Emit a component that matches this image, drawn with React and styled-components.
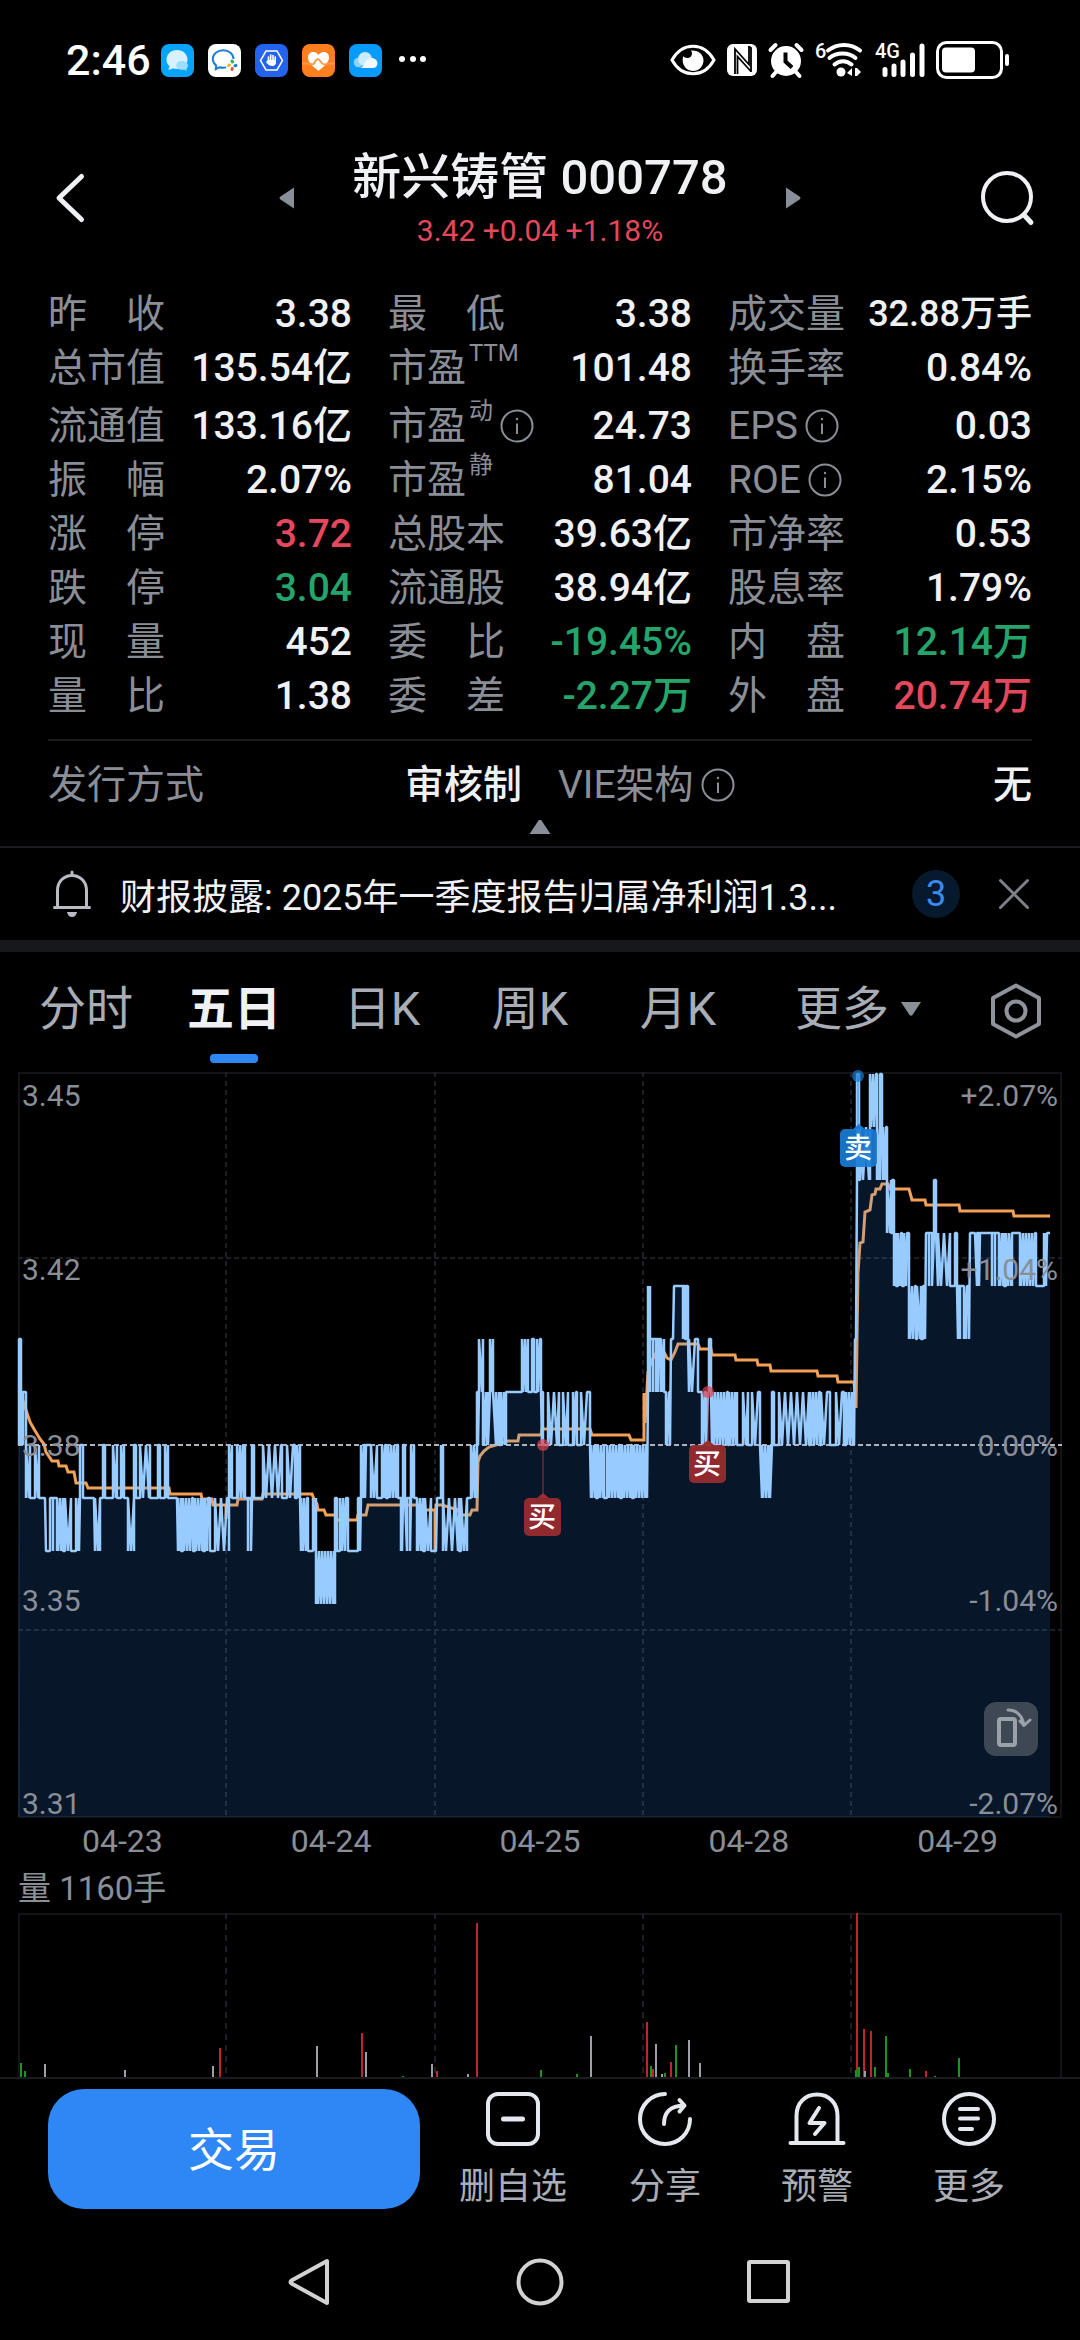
import React, { useState } from 'react'
import styled, { createGlobalStyle } from 'styled-components'

const RED = '#e5485d'
const GREEN = '#24a56c'
const WHITE = '#f0f1f5'
const GREY = '#8a8e96'
const LINE = '#1a1c20'
const BLUE = '#2f87f6'
const FONT = "Roboto, 'Noto Sans CJK SC', sans-serif"

const GlobalStyle = createGlobalStyle`
  body {
    margin: 0;
    background: #000000;
    color: ${WHITE};
    font-family: ${FONT};
  }
  button {
    margin: 0;
    padding: 0;
    border: 0;
    background: none;
    color: inherit;
    font-family: inherit;
    cursor: pointer;
  }
  svg {
    display: block;
    flex: none;
    overflow: visible;
  }
`
const Page = styled.div`
  display: flex;
  flex-direction: column;
  min-height: 100vh;
`

/* status bar */
const StatusBar = styled.div`
  display: flex;
  align-items: center;
  justify-content: space-between;
  height: 120px;
  padding: 0 70px 0 66px;
`
const StatusGroup = styled.div`
  display: flex;
  align-items: center;
  gap: ${(props) => props.gap}px;
`
const Clock = styled.span`
  font-size: 43px;
  line-height: 48px;
  font-weight: 500;
  color: #ffffff;
  margin-right: -4px;
`

/* header */
const Header = styled.header`
  display: flex;
  align-items: center;
  justify-content: space-between;
  padding: 22px 48px 33px;
`
const StockSwitch = styled.div`
  display: flex;
  align-items: center;
  justify-content: space-between;
  width: 54%;
`
const StockName = styled.div`
  padding-top: 6px;
  text-align: center;
`
const Title = styled.h1`
  margin: 0;
  font-size: 49px;
  line-height: 60px;
  font-weight: 500;
`
const Quote = styled.div`
  font-size: 30px;
  line-height: 46px;
  color: ${RED};
`

/* key figures */
const Stats = styled.dl`
  display: grid;
  grid-template-columns: repeat(3, 1fr);
  grid-template-rows: 54px 54px 58px repeat(5, 54px);
  align-items: end;
  column-gap: 36px;
  margin: 0 48px;
  padding-bottom: 16px;
  border-bottom: 2px solid ${LINE};
`
const IssueStats = styled.dl`
  display: grid;
  grid-template-columns: repeat(2, 1fr);
  column-gap: 36px;
  margin: 0 48px;
  padding-top: 17px;
`
const Stat = styled.div`
  display: flex;
  align-items: center;
  justify-content: space-between;
  height: 54px;
  font-size: 39px;
  line-height: 54px;
  white-space: nowrap;
`
const StatLabel = styled.dt`
  display: flex;
  align-items: center;
  color: ${GREY};
`
const StatSup = styled.sup`
  align-self: flex-start;
  margin-left: 3px;
  font-size: 24px;
  line-height: 24px;
`
const StatValue = styled.dd`
  margin: 0;
  font-size: ${(props) => (props.$long ? 36 : 39)}px;
  font-weight: 500;
  color: ${(props) => props.color || WHITE};
`
const InfoButton = styled.button`
  margin-left: 7px;
`
const Collapse = styled.button`
  display: flex;
  justify-content: center;
  width: 100%;
  height: 34px;
  padding-top: 7px;
`

/* notice */
const Notice = styled.section`
  display: flex;
  align-items: center;
  height: 92px;
  padding: 0 48px;
  border-top: 2px solid ${LINE};
  border-bottom: 12px solid #17181c;
`
const NoticeText = styled.a`
  flex: 1;
  margin-left: 24px;
  font-size: 36px;
  color: ${WHITE};
  text-decoration: none;
  white-space: nowrap;
`
const NoticeCount = styled.span`
  width: 48px;
  border-radius: 24px;
  background: #07192d;
  color: #3a8af2;
  font-size: 36px;
  line-height: 48px;
  text-align: center;
`
const CloseButton = styled.button`
  margin-left: 36px;
`

/* period tabs */
const Tabs = styled.nav`
  display: grid;
  grid-template-columns: repeat(5, 148fr) 212fr 104fr;
  height: 120px;
  padding: 0 12px;
`
const Tab = styled.button`
  display: flex;
  flex-direction: column;
  align-items: center;
  gap: 21px;
  padding-top: 33px;
  font-size: 47px;
  line-height: 48px;
  font-weight: ${(props) => (props.$active ? 700 : 400)};
  color: ${(props) => (props.$active ? WHITE : '#a9adb5')};
  &::after {
    content: '';
    width: 48px;
    height: 9px;
    border-radius: 4px;
    background: ${(props) => (props.$active ? BLUE : 'transparent')};
  }
`
const TabText = styled.span`
  display: flex;
  align-items: center;
  gap: 12px;
`
const SettingsButton = styled.button`
  display: flex;
  justify-content: center;
  padding-top: 31px;
`

/* charts */
const ChartBox = styled.section`
  position: relative;
  margin: 0 18px;
  svg {
    width: 100%;
    height: auto;
  }
`
const RotateButton = styled.button`
  position: absolute;
  right: 24px;
  bottom: 61px;
  width: 54px;
  height: 54px;
  border-radius: 12px;
  background: #3e4855;
`
const Dates = styled.div`
  display: grid;
  grid-template-columns: repeat(5, 1fr);
  margin: 0 18px;
  font-size: 32px;
  line-height: 48px;
  color: ${GREY};
  text-align: center;
`
const VolumeTitle = styled.div`
  margin: 0 18px;
  font-size: 33px;
  line-height: 48px;
  color: ${GREY};
`

/* bottom */
const ActionBar = styled.footer`
  display: grid;
  grid-template-columns: 389fr repeat(4, 152fr);
  padding: 10px 35px 0 48px;
  border-top: 2px solid ${LINE};
`
const TradeButton = styled.button`
  height: 120px;
  margin-right: 17px;
  padding-bottom: 6px;
  border-radius: 36px;
  background: ${BLUE};
  color: #ffffff;
  font-size: 46px;
`
const Action = styled.button`
  display: flex;
  flex-direction: column;
  align-items: center;
  gap: 16px;
  padding-top: 2px;
  font-size: 36px;
  line-height: 48px;
  color: #a9adb5;
  white-space: nowrap;
`
const SystemNav = styled.nav`
  display: flex;
  justify-content: center;
  gap: 177px;
  padding: 45px 0 32px;
`

const stats = [
  ['昨　收', '3.38'],
  ['最　低', '3.38'],
  ['成交量', '32.88万手', { long: true }],
  ['总市值', '135.54亿'],
  ['市盈', '101.48', { sup: 'TTM' }],
  ['换手率', '0.84%'],
  ['流通值', '133.16亿'],
  ['市盈', '24.73', { sup: '动', info: true }],
  ['EPS', '0.03', { info: true }],
  ['振　幅', '2.07%'],
  ['市盈', '81.04', { sup: '静' }],
  ['ROE', '2.15%', { info: true }],
  ['涨　停', '3.72', { color: RED }],
  ['总股本', '39.63亿'],
  ['市净率', '0.53'],
  ['跌　停', '3.04', { color: GREEN }],
  ['流通股', '38.94亿'],
  ['股息率', '1.79%'],
  ['现　量', '452'],
  ['委　比', '-19.45%', { color: GREEN }],
  ['内　盘', '12.14万', { color: GREEN }],
  ['量　比', '1.38'],
  ['委　差', '-2.27万', { color: GREEN }],
  ['外　盘', '20.74万', { color: RED }],
]

// [from x, to x, high, low], levels are cents away from 3.38
const priceRuns = [
  [1, 3, 2, 0], [3, 5, 1, 1], [5, 8, 1, 0], [8, 12, 0, -1], [12, 16, -1, -1],
  [17, 21, 0, -1], [22, 27, -1, -1], [28, 32, -2, -2], [32, 35, -1, -2], [35, 39, -1, -1],
  [39, 45, -1, -2], [47, 53, -1, -2], [53, 57, -2, -2], [58, 61, -1, -2], [62, 65, 0, -1],
  [65, 76, -1, -1], [77, 82, -1, -2], [82, 85, -1, -1], [85, 87, 0, -1], [87, 95, -1, -1],
  [95, 99, 0, -1], [99, 102, -1, -1], [103, 106, 0, -1], [106, 110, -1, -1], [110, 116, -1, -2],
  [116, 118, 0, -1], [119, 121, -1, -1], [122, 132, 0, -1], [132, 139, -1, -1], [140, 142, 0, -1],
  [143, 146, -1, -1], [147, 150, 0, -1], [150, 159, -1, -1], [160, 163, -1, -2], [165, 175, -1, -2],
  [177, 185, -1, -2], [187, 192, -1, -2], [195, 197, -2, -2], [197, 211, -1, -2],
  [211, 214, 0, -1], [214, 218, -1, -1], [219, 227, 0, -1], [227, 230, -1, -1], [230, 233, -1, -2],
  [234, 236, 0, -1], [237, 244, -1, -1], [245, 264, 0, -1], [264, 268, -1, -1], [269, 277, 0, -1],
  [279, 282, 0, -1], [283, 290, -1, -2], [290, 294, -2, -2], [295, 298, -1, -2], [298, 317, -2, -3],
  [317, 319, -1, -2], [320, 322, -2, -2], [322, 330, -1, -2], [330, 339, -2, -2], [340, 342, -1, -2],
  [343, 347, 0, -1], [348, 353, 0, 0], [353, 359, 0, -1], [359, 363, -1, -1], [364, 368, 0, -1],
  [370, 380, 0, -1], [380, 383, -1, -1], [383, 384, -1, -2], [385, 387, 0, -1], [389, 392, -1, -2],
  [393, 396, 0, -1], [396, 399, -1, -1], [399, 405, -1, -2], [407, 413, -1, -2], [413, 418, -2, -2],
  [419, 422, -1, -1], [423, 425, 0, -1], [425, 441, -1, -2], [443, 449, -1, -2], [449, 452, -1, -1],
  [453, 459, 0, -1], [459, 460, 1, 0], [461, 465, 2, 1], [465, 470, 1, 0], [472, 475, 2, 1],
  [478, 481, 1, 0], [483, 488, 1, 0], [488, 504, 1, 1], [504, 510, 2, 1], [511, 513, 1, 1],
  [514, 516, 2, 1], [519, 523, 2, 1], [524, 525, 1, 0], [525, 529, 0, 0], [530, 541, 1, 0],
  [541, 544, 0, 0], [545, 550, 1, 0], [550, 555, 0, 0], [555, 559, 1, 0], [560, 563, 0, 0],
  [563, 572, 1, 0], [573, 578, 0, -1], [580, 586, 0, -1], [586, 589, -1, -1], [589, 602, 0, -1],
  [604, 614, 0, -1], [616, 629, 0, -1], [630, 632, 3, 1], [632, 635, 2, 1], [635, 638, 2, 2],
  [638, 640, 2, 1], [641, 643, 2, 2], [643, 646, 2, 1], [646, 648, 1, 1], [648, 652, 1, 0],
  [653, 655, 2, 2], [656, 665, 3, 3], [665, 667, 3, 2], [668, 670, 3, 2], [671, 680, 2, 1],
  [680, 684, 1, 1], [684, 688, 1, 0], [690, 691, 1, 1], [691, 693, 2, 1], [694, 710, 1, 0],
  [711, 719, 1, 0], [720, 724, 0, 0], [725, 730, 1, 0], [731, 733, 0, 0], [734, 742, 1, 0],
  [744, 752, 0, -1], [754, 756, 1, 0], [757, 761, 0, 0], [761, 791, 1, 0], [792, 802, 1, 0],
  [803, 812, 1, 0], [812, 818, 0, 0], [818, 826, 1, 0], [828, 836, 1, 0], [837, 838, 2, 2],
  [839, 841, 7, 5], [842, 852, 6, 5], [852, 859, 7, 6], [859, 862, 6, 5], [862, 864, 7, 6],
  [865, 869, 6, 5], [869, 873, 5, 4], [874, 876, 5, 4], [876, 878, 4, 3], [880, 884, 4, 3],
  [886, 891, 4, 3], [891, 898, 3, 2], [899, 903, 3, 2], [905, 907, 3, 2], [908, 911, 4, 4],
  [911, 914, 4, 3], [916, 918, 5, 4], [920, 932, 4, 3], [934, 936, 3, 3], [937, 939, 4, 3],
  [940, 942, 3, 2], [942, 946, 3, 3], [946, 951, 3, 2], [952, 957, 4, 4], [959, 961, 4, 3],
  [962, 974, 4, 4], [974, 977, 4, 3], [977, 981, 4, 4], [981, 986, 4, 3], [988, 994, 4, 3],
  [994, 1002, 4, 4], [1002, 1018, 4, 3], [1018, 1025, 3, 3], [1026, 1028, 4, 3], [1029, 1032, 4, 4],
]

const averagePoints =
  '3,323 9,341 12,350 16,357 22,367 26,372 28,380 34,389 40,389 41,394 48,394 50,400 56,400 58,411 68,411 70,416 151,416 152,422 183,422 184,427 194,427 195,433 208,433 208,447 209,433 219,433 220,427 244,427 245,422 294,422 296,427 299,432 300,438 306,438 308,443 318,443 319,448 339,448 340,443 348,443 350,433 404,433 405,438 417,438 417,480 418,433 424,433 440,438 442,443 452,443 454,438 459,438 460,390 462,384 466,379 471,375 478,373 489,369 500,369 501,363 523,363 524,357 572,357 574,363 611,363 613,368 626,368 626,321 627,351 630,300 634,288 640,278 645,278 649,286 653,288 657,280 660,272 680,272 682,277 693,277 694,283 717,283 718,288 739,288 740,293 752,293 753,299 799,299 800,304 819,304 820,310 836,310 838,336 840,201 842,171 845,170 847,140 852,138 854,123 857,122 858,117 862,117 864,112 870,112 872,117 891,117 894,128 907,128 908,133 941,133 942,139 995,139 996,144 1032,144'

const volumes = [
  [3, 14, 'g'], [7, 6, 'g'], [27, 13, 'w'], [107, 7, 'w'], [195, 11, 'w'], [202, 29, 'r'],
  [299, 31, 'w'], [344, 44, 'r'], [348, 25, 'w'], [385, 1, 'g'], [414, 13, 'w'], [419, 6, 'r'],
  [450, 3, 'w'], [459, 154, 'r'], [523, 7, 'g'], [559, 3, 'g'], [573, 41, 'w'], [629, 55, 'r'],
  [633, 11, 'g'], [635, 8, 'r'], [638, 33, 'w'], [644, 3, 'w'], [647, 4, 'g'], [653, 15, 'r'],
  [658, 32, 'g'], [671, 37, 'w'], [682, 14, 'w'], [839, 164, 'r'], [846, 48, 'r'], [853, 46, 'r'],
  [838, 7, 'g'], [841, 10, 'g'], [847, 6, 'w'], [857, 10, 'g'], [868, 41, 'g'], [870, 4, 'g'],
  [892, 8, 'g'], [908, 6, 'r'], [917, 1, 'g'], [941, 19, 'g'],
]
const volumeColors = { r: '#c2242b', g: '#1f9320', w: '#9c9fa8' }

const levelY = (level) => Math.round(373 - level * 53) 

const buildPriceLine = () => {
  const points = []
  priceRuns.forEach(([from, to, high, low]) => {
    if (high === low) {
      points.push([from, high], [to, high])
      return
    }
    let up = false
    points.push([from, low])
    for (let x = from; x < to; x += (x % 3) + 1) {
      up = !up
      points.push([x, up ? high : low])
    }
    points.push([to, high], [to, low])
  })
  return points.map(([x, level]) => `${x},${levelY(level)}`).join(' ')
}
const priceLine = buildPriceLine()

const gridX = [208, 417, 625, 833]

function InfoIcon() {
  return (
    <svg width="34" height="34" viewBox="0 0 34 34" fill="none" stroke={GREY} strokeWidth="2">
      <circle cx="17" cy="17" r="15.5" />
      <path d="M17 14.5v10.5" />
      <circle cx="17" cy="10" r="1.2" fill={GREY} stroke="none" />
    </svg>
  )
}

function StatItem({ label, value, sup, info, color, long }) {
  return (
    <Stat>
      <StatLabel>
        {label}
        {sup && <StatSup>{sup}</StatSup>}
        {info && (
          <InfoButton aria-label={label}>
            <InfoIcon />
          </InfoButton>
        )}
      </StatLabel>
      <StatValue color={color} $long={long}>
        {value}
      </StatValue>
    </Stat>
  )
}

function AppIcons() {
  return (
    <StatusGroup gap={14}>
      <svg width="33" height="33" viewBox="0 0 33 33">
        <rect width="33" height="33" rx="8" fill="#08a4fb" />
        <path d="M16 6c6 0 10.500 4.200 10.500 9.500S22 25 16 25c-1.600 0-3-.3-4.300-.8-1.200.9-3 1.500-4.700 1.300 1-1 1.500-2.100 1.500-3.200C6.600 20.500 5.500 18.200 5.500 15.500 5.500 10.200 10 6 16 6z" fill="#d8f1ff" />
        <path d="M21 17c3.300 0 6 2 6 4.600 0 1.400-.6 2.400-1.600 3.200 0 .7.300 1.300.8 1.800-1.200.1-2.200-.2-3-.8-4.200.6-8-1.200-8-4.200 0-2.600 2.500-4.600 5.800-4.600z" fill="#9bdcff" />
      </svg>
      <svg width="33" height="33" viewBox="0 0 33 33" fill="none">
        <rect width="33" height="33" rx="8" fill="#ffffff" />
        <path d="M25.500 15c0-5-4.600-8.800-10.300-8.800S4.800 10 4.800 15c0 2.800 1.300 5 3.400 6.600L7.700 25l3.700-1.700c1.200.3 2.500.5 3.800.5 1 0 2-.1 3-.4" stroke="#1c7fd6" strokeWidth="2" />
        <path d="M24 17l.5 1" stroke="#2bb24c" strokeWidth="3" strokeLinecap="round" />
        <path d="M28 21.500l-1 .2" stroke="#1c7fd6" strokeWidth="3" strokeLinecap="round" />
        <path d="M24 25.500l.2-1" stroke="#f0562a" strokeWidth="3" strokeLinecap="round" />
        <path d="M20.500 21.500l1-.5" stroke="#f6b81c" strokeWidth="3" strokeLinecap="round" />
      </svg>
      <svg width="33" height="33" viewBox="0 0 33 33" fill="none">
        <rect width="33" height="33" rx="8" fill="#2463ee" />
        <path d="M11 7h11l5.500 9.500L22 26H11L5.500 16.500z" stroke="#ffffff" strokeWidth="1.500" />
        <path d="M13.500 18v-5M15.700 17v-6M18 17v-5.500M20.200 18v-5" stroke="#ffffff" strokeWidth="1.600" strokeLinecap="round" />
        <path d="M12.800 16h8.200v2.500c0 2-1.300 3.500-3.500 3.500-2.800 0-4.700-1.500-6.500-4z" fill="#ffffff" />
      </svg>
      <svg width="33" height="33" viewBox="0 0 33 33" fill="none">
        <rect width="33" height="33" rx="8" fill="#ff7f1e" />
        <path d="M16.500 27C10 22 6 18 6 13.300 6 10 8.500 8 11.300 8c2.200 0 4 1.200 5.200 3 1.200-1.800 3-3 5.200-3C24.500 8 27 10 27 13.300 27 18 23 22 16.500 27z" fill="#ffffff" />
        <path d="M0 19.500h6c3 0 4.500 2 6 0s2-4.500 4-4.500 3 5.500 6 5.500 3-1 5-1h6" stroke="#ff9a4a" strokeWidth="2" />
      </svg>
      <svg width="33" height="33" viewBox="0 0 33 33">
        <rect width="33" height="33" rx="8" fill="#079bfb" />
        <circle cx="9.500" cy="18.500" r="4.800" fill="#8fd4ff" />
        <circle cx="16" cy="15" r="7" fill="#c9ebff" />
        <path d="M11 24c4.500-1 4-7 9-9.500 4-1.800 8.500.6 8.500 5 0 2.600-2 4.500-4.500 4.500z" fill="#f2faff" />
      </svg>
      <svg width="34" height="34" viewBox="0 0 34 34" fill="#ffffff">
        <circle cx="6" cy="16" r="3" />
        <circle cx="17" cy="16" r="3" />
        <circle cx="27" cy="16" r="3" />
      </svg>
    </StatusGroup>
  )
}

function SystemIcons() {
  return (
    <StatusGroup gap={10}>
      <svg width="46" height="32" viewBox="0 0 46 32" fill="none" stroke="#ffffff" strokeWidth="3">
        <path d="M2 16C7 7 14 2.200 23 2.200S39 7 44 16c-5 9-12 13.800-21 13.800S7 25 2 16z" />
        <path d="M21 6.500c2 3 .8 6.800-2.600 7.400-2 .4-4-.3-5.200-1.600C11 19.500 15.500 27 23 27c6 0 10.500-4.700 10.500-10.500S29 6 21 6.500z" fill="#ffffff" stroke="none" />
      </svg>
      <svg width="32" height="32" viewBox="0 0 32 32">
        <rect x="1" width="30" height="32" rx="6" fill="#ffffff" />
        <path d="M9 30V5l14 15.500V2M11.500 30V12.500L25 27.500M23 2.500L25 4v24" fill="none" stroke="#000000" strokeWidth="1.800" />
      </svg>
      <svg width="36" height="36" viewBox="0 0 36 36" fill="#ffffff">
        <circle cx="18" cy="19" r="15" />
        <path d="M2.500 8L7.500 3M33.500 8l-5-5M8 30l-3.500 4M28 30l3.500 4" stroke="#ffffff" strokeWidth="4" strokeLinecap="round" />
        <path d="M17.500 10.500v9l6.500 6" fill="none" stroke="#000000" strokeWidth="4" />
      </svg>
      <svg width="50" height="38" viewBox="0 0 50 38" fill="none" stroke="#ffffff" strokeWidth="4" strokeLinecap="round">
        <text x="1" y="17" fontSize="20" fontWeight="500" fontFamily={FONT} fill="#ffffff" stroke="none">6</text>
        <path d="M14 9.500C23 2 37 2 46 9.500M15.500 17c7-6 19-6 26 0M20.500 23.500c5-4.500 12-4.500 17 0" />
        <circle cx="27" cy="31" r="4.500" fill="#ffffff" stroke="none" />
        <path d="M38 27v8l-5-3zM41 27h2l4 4-4 4h-2z" fill="#ffffff" stroke="none" />
      </svg>
      <svg width="52" height="38" viewBox="0 0 52 38" stroke="#ffffff" strokeWidth="5" strokeLinecap="round">
        <text x="1" y="17" fontSize="20" fontWeight="500" fontFamily={FONT} fill="#ffffff" stroke="none">4G</text>
        <path d="M11 28.500v5M20 25v8.500M29 21v12.500M38.500 14v19.500M48 5v28.500" />
      </svg>
      <svg width="74" height="38" viewBox="0 0 74 38" fill="none">
        <rect x="1.500" y="1.500" width="64" height="35" rx="9" stroke="#ffffff" strokeWidth="3" />
        <rect x="6" y="6.500" width="33" height="25" rx="4" fill="#ffffff" />
        <path d="M71 15v8" stroke="#ffffff" strokeWidth="4" strokeLinecap="round" />
      </svg>
    </StatusGroup>
  )
}

function TradeMark({ x, y, dotX, dotY, text, fill, dotFill }) {
  return (
    <g>
      <path d={`M${dotX} ${dotY}V${y - 4}`} stroke={dotFill} strokeWidth="1" opacity="0.7" />
      <circle cx={dotX} cy={dotY} r="6" fill={dotFill} opacity="0.7" />
      <path d={`M${x + 13} ${y}l6 -5l6 5z`} fill={fill} />
      <rect x={x} y={y} width="37" height="38" rx="5" fill={fill} opacity="0.92" />
      <text x={x + 18} y={y + 29} fontSize="28" fontWeight="500" fill="#ffffff" textAnchor="middle">
        {text}
      </text>
    </g>
  )
}

function PriceChart() {
  return (
    <svg viewBox="0 0 1044 745" fontFamily={FONT} role="img" aria-label="五日">
      <g fill="none" stroke="#1d1f24" strokeWidth="2">
        <rect x="1" y="1" width="1042" height="744" stroke="#121418" />
        {gridX.map((x) => (
          <path key={x} d={`M${x} 0V745`} strokeDasharray="5 4" />
        ))}
        <path d="M0 186H1044M0 558H1044" strokeDasharray="5 3" />
      </g>
      <polyline points={averagePoints} fill="none" stroke="#f3a157" strokeWidth="3" />
      <polygon points={`0,745 ${priceLine} 1032,745`} fill="#2e8cff" opacity="0.16" />
      <path d="M0 373H1044" stroke="#aeb3bd" strokeWidth="2" strokeDasharray="5 3" />
      <polyline points={priceLine} fill="none" stroke="#98cbff" strokeWidth="2.500" strokeLinejoin="bevel" />
      <g fontSize="30" fill={GREY}>
        <text x="4" y="34">3.45</text>
        <text x="4" y="208">3.42</text>
        <text x="4" y="384">3.38</text>
        <text x="4" y="539">3.35</text>
        <text x="4" y="742">3.31</text>
        <g textAnchor="end">
          <text x="1040" y="34">+2.07%</text>
          <text x="1040" y="208">+1.04%</text>
          <text x="1040" y="384">0.00%</text>
          <text x="1040" y="539">-1.04%</text>
          <text x="1040" y="742">-2.07%</text>
        </g>
      </g>
      <TradeMark x={506} y={426} dotX={525} dotY={373} text="买" fill="#9d2d30" dotFill="#d8414f" />
      <TradeMark x={671} y={373} dotX={690} dotY={320} text="买" fill="#9d2d30" dotFill="#d8414f" />
      <TradeMark x={822} y={57} dotX={840} dotY={4} text="卖" fill="#1a7cd4" dotFill="#1a7cd4" />
    </svg>
  )
}

function VolumeChart() {
  return (
    <svg viewBox="0 0 1044 164" role="img" aria-label="量">
      <g fill="none" stroke="#1d1f24" strokeWidth="2">
        <path d="M1 164V1H1043V164" stroke="#121418" />
        {gridX.map((x) => (
          <path key={x} d={`M${x} 0V164`} strokeDasharray="6 5" />
        ))}
      </g>
      {volumes.map(([x, height, kind]) => (
        <rect key={x} x={x - 1} y={164 - height} width="2" height={height} fill={volumeColors[kind]} />
      ))}
    </svg>
  )
}

function App() {
  const [period, setPeriod] = useState('五日')

  return (
    <>
      <GlobalStyle />
      <Page>
        <StatusBar>
          <StatusGroup gap={14}>
            <Clock>2:46</Clock>
            <AppIcons />
          </StatusGroup>
          <SystemIcons />
        </StatusBar>

        <Header>
          <button aria-label="返回">
            <svg width="52" height="52" viewBox="0 0 52 52" fill="none" stroke={WHITE} strokeWidth="5" strokeLinecap="round" strokeLinejoin="round">
              <path d="M33.500 4.500L11 26l22.500 21.500" />
            </svg>
          </button>
          <StockSwitch>
            <button aria-label="上一只">
              <svg width="24" height="24" viewBox="0 0 24 24" fill="#8a8e98">
                <path d="M20 1.500v21L6.500 13.500q-2-1.500 0-3z" />
              </svg>
            </button>
            <StockName>
              <Title>新兴铸管 000778</Title>
              <Quote>3.42 +0.04 +1.18%</Quote>
            </StockName>
            <button aria-label="下一只">
              <svg width="24" height="24" viewBox="0 0 24 24" fill="#8a8e98">
                <path d="M4 1.500v21l13.500-9q2-1.500 0-3z" />
              </svg>
            </button>
          </StockSwitch>
          <button aria-label="搜索">
            <svg width="52" height="52" viewBox="0 0 52 52" fill="none" stroke={WHITE} strokeWidth="4" strokeLinecap="round">
              <circle cx="27" cy="25" r="24" />
              <path d="M44 43l7 7.500" strokeWidth="5" />
            </svg>
          </button>
        </Header>

        <Stats>
          {stats.map(([label, value, extra], i) => (
            <StatItem key={i} label={label} value={value} {...extra} />
          ))}
        </Stats>
        <IssueStats>
          <StatItem label="发行方式" value="审核制" />
          <StatItem label="VIE架构" value="无" info />
        </IssueStats>
        <Collapse aria-label="收起">
          <svg width="22" height="16" viewBox="0 0 22 16" fill="#8a8e98">
            <path d="M9.500 1.500q1.500-1.500 3 0L21.500 15H.5z" />
          </svg>
        </Collapse>

        <Notice>
          <svg width="48" height="48" viewBox="0 0 48 48" fill="none" stroke="#b9bcc3" strokeWidth="3" strokeLinecap="round">
            <path d="M9.500 37V20.500C9.500 12 15.500 5.500 24 5.500s14.500 6.500 14.500 15V37M6.500 37.500h35M24 2v3" />
            <path d="M19 42h10q-1 5-5 5t-5-5z" fill="#b9bcc3" stroke="none" />
          </svg>
          <NoticeText href="#">财报披露: 2025年一季度报告归属净利润1.3...</NoticeText>
          <NoticeCount>3</NoticeCount>
          <CloseButton aria-label="关闭">
            <svg width="36" height="36" viewBox="0 0 36 36" stroke="#7d8088" strokeWidth="3" strokeLinecap="round">
              <path d="M4.500 4.500l27 27M31.500 4.500l-27 27" />
            </svg>
          </CloseButton>
        </Notice>

        <Tabs>
          {['分时', '五日', '日K', '周K', '月K'].map((name) => (
            <Tab key={name} $active={name === period} onClick={() => setPeriod(name)}>
              <TabText>{name}</TabText>
            </Tab>
          ))}
          <Tab>
            <TabText>
              更多
              <svg width="20" height="16" viewBox="0 0 20 16" fill="#8a8e96">
                <path d="M0 1h20l-8.500 13q-1.500 1.500-3 0z" />
              </svg>
            </TabText>
          </Tab>
          <SettingsButton aria-label="设置">
            <svg width="54" height="56" viewBox="0 0 54 56" fill="none" stroke="#8f939b" strokeWidth="4" strokeLinejoin="round">
              <path d="M27 2.500L50 15v26L27 53.500 4 41V15z" />
              <circle cx="27" cy="28" r="9.500" />
            </svg>
          </SettingsButton>
        </Tabs>

        <ChartBox>
          <PriceChart />
          <RotateButton aria-label="横屏">
            <svg viewBox="0 0 54 54" fill="none" stroke="#9ba1a9" strokeWidth="4" strokeLinecap="round" strokeLinejoin="round">
              <rect x="15" y="17" width="16" height="26" rx="2" />
              <path d="M24 8c8 0 14 5 16 15M36 19l4 4.500 6-5.500" strokeWidth="3" />
            </svg>
          </RotateButton>
        </ChartBox>
        <Dates>
          <time>04-23</time>
          <time>04-24</time>
          <time>04-25</time>
          <time>04-28</time>
          <time>04-29</time>
        </Dates>
        <VolumeTitle>量 1160手</VolumeTitle>
        <ChartBox>
          <VolumeChart />
        </ChartBox>

        <ActionBar>
          <TradeButton>交易</TradeButton>
          <Action>
            <svg width="56" height="56" viewBox="0 0 56 56" fill="none" stroke="#e6e8ef" strokeWidth="4" strokeLinecap="round">
              <rect x="3" y="3" width="50" height="50" rx="10" />
              <path d="M18.500 28h19" strokeWidth="5" />
            </svg>
            删自选
          </Action>
          <Action>
            <svg width="56" height="56" viewBox="0 0 56 56" fill="none" stroke="#e6e8ef" strokeWidth="4" strokeLinecap="round" strokeLinejoin="round">
              <path d="M28 3C14.500 3 3 14 3 28s11 25 25 25 25-11 25-25" />
              <path d="M27 33c0-12 6-18 20-18.500M42.500 9l5 5.500-5 6" />
            </svg>
            分享
          </Action>
          <Action>
            <svg width="58" height="56" viewBox="0 0 58 56" fill="none" stroke="#e6e8ef" strokeWidth="4" strokeLinecap="round" strokeLinejoin="round">
              <path d="M8.500 51V25C8.500 12 17 3.500 29 3.500S49.500 12 49.500 25v26M2.500 52h53" />
              <path d="M31 17l-9.500 15h15L27 43" />
            </svg>
            预警
          </Action>
          <Action>
            <svg width="56" height="56" viewBox="0 0 56 56" fill="none" stroke="#e6e8ef" strokeWidth="4" strokeLinecap="round">
              <circle cx="28" cy="28" r="25" />
              <path d="M19 18h18M19 27.500h18M19 38h12" />
            </svg>
            更多
          </Action>
        </ActionBar>

        <SystemNav>
          <button aria-label="后退">
            <svg width="52" height="52" viewBox="0 0 52 52" fill="none" stroke="#d2d2d2" strokeWidth="4" strokeLinejoin="round">
              <path d="M42 5v42L6.500 27.500q-2-1.500 0-3z" />
            </svg>
          </button>
          <button aria-label="主页">
            <svg width="52" height="52" viewBox="0 0 52 52" fill="none" stroke="#d2d2d2" strokeWidth="4">
              <circle cx="26" cy="26" r="21.500" />
            </svg>
          </button>
          <button aria-label="最近任务">
            <svg width="52" height="52" viewBox="0 0 52 52" fill="none" stroke="#d2d2d2" strokeWidth="4" strokeLinejoin="round">
              <rect x="6" y="6" width="39" height="39" rx="1" />
            </svg>
          </button>
        </SystemNav>
      </Page>
    </>
  )
}

export default App
